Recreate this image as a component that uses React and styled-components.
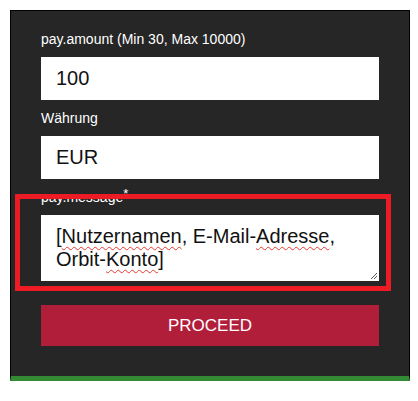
import React, { useState } from "react";
import styled, { createGlobalStyle } from "styled-components";

const GlobalStyle = createGlobalStyle`
  body {
    margin: 0;
    background: #fff;
    font-family: "Liberation Sans", Arial, sans-serif;
  }
`;

const Page = styled.div`
  padding: 10px;
`;

const Panel = styled.form`
  position: relative;
  width: 400px;
  box-sizing: border-box;
  background: #262626;
  border: 1px solid #000;
  border-bottom: 5px solid #338a35;
  padding: 20px 30px 30px;
  display: flex;
  flex-direction: column;
`;

const Field = styled.div`
  display: flex;
  flex-direction: column;
  margin-bottom: ${(p) => p.gap || 10}px;
`;

const Label = styled.label`
  color: #fff;
  font-size: 14px;
  line-height: 16px;
  margin-bottom: 10px;

  sup {
    font-size: 13px;
    line-height: 0;
    vertical-align: 4px;
  }
`;

const Input = styled.input`
  height: 43px;
  box-sizing: border-box;
  border: none;
  outline: none;
  padding: 0 15px;
  font-family: "Liberation Sans", Arial, sans-serif;
  font-size: 20px;
  color: #111;
  background: #fff;
`;

const TextBox = styled.div`
  position: relative;
  height: 66px;
  box-sizing: border-box;
  padding: 10px 15px;
  background: #fff;
  color: #111;
  font-size: 20px;
  line-height: 23px;
`;

const Typo = styled.span`
  text-decoration: underline wavy #e53935;
  text-decoration-thickness: 1px;
  text-underline-offset: 3px;
`;

const Grip = styled.svg`
  position: absolute;
  right: 1px;
  bottom: 1px;
`;

const Button = styled.button`
  margin-top: 14px;
  height: 41px;
  border: none;
  background: #b01e3a;
  color: #fff;
  font-family: "Liberation Sans", Arial, sans-serif;
  font-size: 17px;
  cursor: pointer;
`;

const Highlight = styled.div`
  position: absolute;
  left: 4px;
  top: 183px;
  width: 376px;
  height: 97px;
  box-sizing: border-box;
  border: 5px solid #ed1c24;
  pointer-events: none;
`;

const App = () => {
  const [amount, setAmount] = useState("100");
  const [currency, setCurrency] = useState("EUR");

  return (
    <Page>
      <GlobalStyle />
      <Panel onSubmit={(e) => e.preventDefault()}>
        <Field>
          <Label>pay.amount (Min 30, Max 10000)</Label>
          <Input value={amount} onChange={(e) => setAmount(e.target.value)} />
        </Field>
        <Field gap={10}>
          <Label>Währung</Label>
          <Input
            value={currency}
            onChange={(e) => setCurrency(e.target.value)}
          />
        </Field>
        <Field>
          <Label>
            pay.message<sup>*</sup>
          </Label>
          <TextBox role="textbox">
            [<Typo>Nutzernamen</Typo>, E-Mail-<Typo>Adresse</Typo>,
            <br />
            Orbit-<Typo>Konto</Typo>]
            <Grip width="9" height="9" viewBox="0 0 9 9">
              <path d="M8 2 L2 8 M8 5 L5 8" stroke="#555" strokeWidth="1" />
            </Grip>
          </TextBox>
        </Field>
        <Button type="submit">PROCEED</Button>
        <Highlight />
      </Panel>
    </Page>
  );
};

export default App;
